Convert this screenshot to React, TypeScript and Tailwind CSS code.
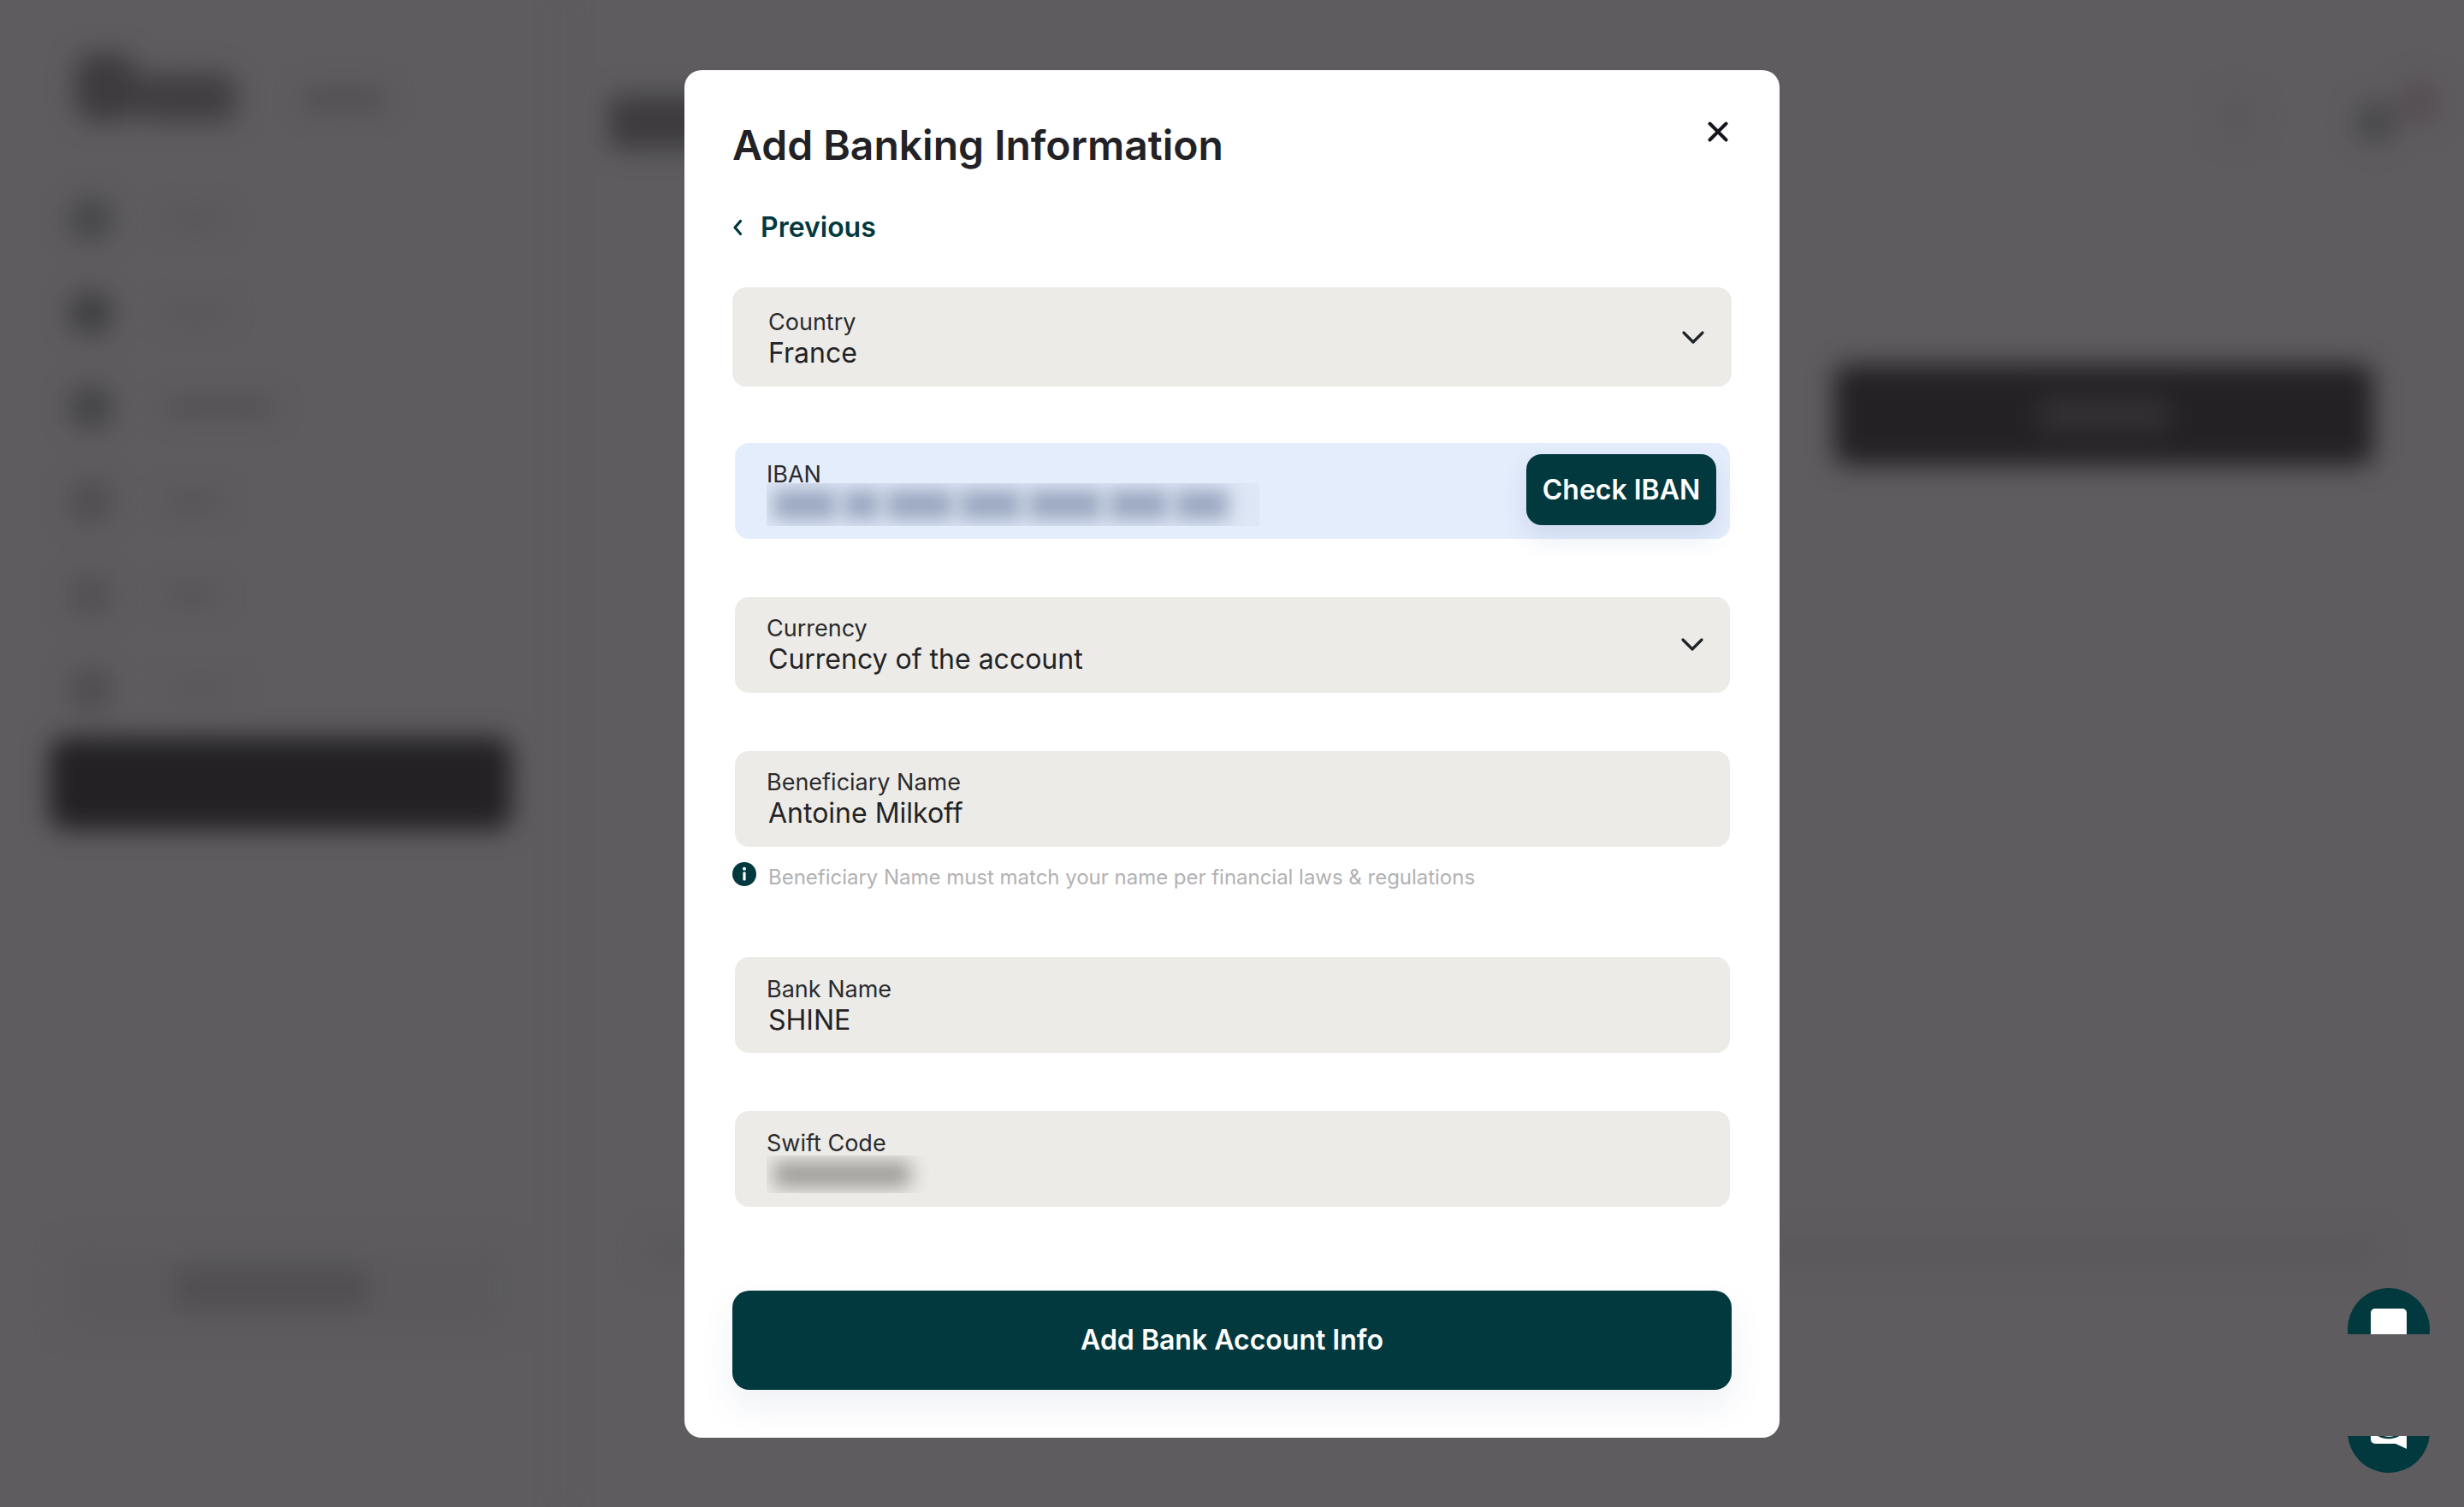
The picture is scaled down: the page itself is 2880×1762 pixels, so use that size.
import React from "react";

const teal = "bg-[#02393e]";

function Chevron() {
  return (
    <svg width="28" height="18" viewBox="0 0 28 18" fill="none" className="shrink-0">
      <path d="M3 3 L14 14 L25 3" stroke="#1f2328" strokeWidth="3.2" strokeLinecap="round" strokeLinejoin="round" />
    </svg>
  );
}

function Field({
  label,
  value,
  top = "pt-[21px]",
  h = "h-[112px]",
  wide = false,
  chevron = false,
  children,
}: {
  label: string;
  value?: string;
  top?: string;
  h?: string;
  wide?: boolean;
  chevron?: boolean;
  children?: React.ReactNode;
}) {
  return (
    <div className={`${h} ${wide ? "" : "ml-[3px] mr-[2px]"} ${top} flex items-start justify-between rounded-[16px] bg-[#ecebe7] ${wide ? "pl-[42px] pr-[31px]" : "pl-[37px] pr-[30px]"}`}>
      <div className="flex flex-col">
        <div className="text-[27px] leading-[34px] text-[#2b2b2d]">{label}</div>
        {value ? <div className={`text-[32px] leading-[38px] text-[#232326] ${wide ? "" : "ml-[2px]"}`}>{value}</div> : children}
      </div>
      {chevron ? <div className={wide ? "mt-[26px]" : "mt-[27px]"}><Chevron /></div> : null}
    </div>
  );
}

function NavRow({ icon, text, w }: { icon: string; text: string; w: string }) {
  return (
    <div className="flex h-[110px] items-center">
      <div className={`ml-[80px] h-[52px] w-[52px] rounded-full ${icon}`} />
      <div className={`ml-[62px] h-[18px] rounded-sm ${text} ${w}`} />
    </div>
  );
}

export default function App() {
  return (
    <div className="relative h-[1762px] w-[2880px] overflow-hidden bg-[#5e5c5f] font-['Inter',sans-serif]">
      {/* blurred page behind the dialog */}
      <div className="flex h-full w-full blur-[15px]">
        <aside className="flex w-[660px] shrink-0 flex-col border-r-2 border-[#58565a]">
          <div className="mt-[62px] flex items-end">
            <div className="ml-[88px] flex items-end">
              <div className="h-[80px] w-[72px] rounded-[24px] bg-[#3d3b3e]" />
              <div className="h-[56px] w-[116px] rounded-[16px] bg-[#403e41]" />
            </div>
            <div className="mb-[14px] ml-[78px] h-[24px] w-[96px] rounded bg-[#504e51]" />
          </div>
          <div className="mt-[59px] flex flex-col">
            <NavRow icon="bg-[#474649]" text="bg-[#575558]" w="w-[70px]" />
            <NavRow icon="bg-[#3f3e41]" text="bg-[#575558]" w="w-[70px]" />
            <NavRow icon="bg-[#444346]" text="bg-[#4f4d50]" w="w-[126px]" />
            <NavRow icon="bg-[#504e51]" text="bg-[#535154]" w="w-[64px]" />
            <NavRow icon="bg-[#535154]" text="bg-[#535154]" w="w-[60px]" />
            <NavRow icon="bg-[#4f4d50]" text="bg-[#585659]" w="w-[80px]" />
          </div>
          <div className="ml-[58px] mt-[1px] h-[108px] w-[540px] rounded-[20px] bg-[#232124]" />
          <div className="ml-[74px] mt-[488px] flex h-[96px] w-[520px] items-center rounded-lg bg-[#5b595c] pl-[130px]">
            <div className="h-[44px] w-[226px] rounded-lg bg-[#504e51]" />
          </div>
        </aside>
        <main className="flex flex-1 flex-col">
          <div className="flex items-start justify-between">
            <div className="ml-[52px] mt-[112px] h-[62px] w-[300px] rounded-lg bg-[#3d3b3e]" />
            <div className="mr-[28px] mt-[94px] flex items-start">
              <div className="mr-[116px] mt-[18px] h-[48px] w-[40px] rounded-lg bg-[#5a585b]" />
              <div className="mt-[24px] h-[50px] w-[50px] rounded-full bg-[#49484b]" />
              <div className="h-[50px] w-[50px] rounded-full bg-[#574d52]" />
            </div>
          </div>
          <div className="mr-[106px] mt-[252px] flex h-[118px] w-[630px] items-center justify-center self-end rounded-[16px] bg-[#232124]">
            <div className="h-[44px] w-[154px] rounded bg-[#323033]" />
          </div>
          <div className="ml-[96px] mr-[100px] mt-[902px] h-[34px] bg-[#5a585b]" />
        </main>
      </div>

      {/* chat launcher, cut by the capture */}
      <div className="absolute left-[2744px] top-[1506px] h-[54px] w-[96px] overflow-hidden">
        <div className={`relative h-[96px] w-[96px] rounded-full ${teal}`}>
          <div className="absolute left-[27px] top-[24px] h-[48px] w-[42px] rounded-[5px] bg-white" />
        </div>
      </div>
      <div className="absolute left-[2744px] top-[1679px] h-[43px] w-[96px] overflow-hidden">
        <div className={`relative -mt-[53px] h-[96px] w-[96px] rounded-full ${teal}`}>
          <svg width="42" height="44" viewBox="0 0 42 44" className="absolute left-[27px] top-[24px]">
            <path d="M5 0 H37 A5 5 0 0 1 42 5 V44 L29 38 H5 A5 5 0 0 1 0 33 V5 A5 5 0 0 1 5 0 Z" fill="#fff" />
            <path d="M5 25 C14 33 28 33 37 25" fill="none" stroke="#02393e" strokeWidth="2.6" strokeLinecap="round" />
          </svg>
        </div>
      </div>

      {/* dialog */}
      <div className="absolute inset-0 flex justify-center pt-[82px]">
        <div className="relative h-[1599px] w-[1280px] rounded-[20px] bg-white pl-[56px] pr-[56px]">
          <button className="absolute right-[60px] top-[60px]">
            <svg width="24" height="24" viewBox="0 0 24 24" fill="none">
              <path d="M2.5 2.5 L21.5 21.5 M21.5 2.5 L2.5 21.5" stroke="#16161d" strokeWidth="4" strokeLinecap="round" />
            </svg>
          </button>
          <h1 className="pt-[57px] text-[48px] font-semibold leading-[62px] text-[#222226]">Add Banking Information</h1>
          <div className="mt-[45px] flex h-[40px] items-center text-[32px] font-semibold leading-[40px] text-[#02393e]">
            <svg width="12" height="20" viewBox="0 0 12 20" fill="none" className="mr-[21px]">
              <path d="M9.5 2.5 L3 10 L9.5 17.5" stroke="#02393e" strokeWidth="3.2" strokeLinecap="round" strokeLinejoin="round" />
            </svg>
            Previous
          </div>

          <div className="mt-[50px]">
            <Field label="Country" value="France" h="h-[116px]" top="pt-[24px]" wide chevron />
          </div>

          <div className="relative ml-[3px] mr-[2px] mt-[66px] flex h-[112px] items-start justify-between rounded-[16px] bg-[#e4edfc] pl-[37px] pr-[16px] pt-[20px]">
            <div className="flex flex-col">
              <div className="text-[27px] leading-[34px] text-[#2b2b2d]">IBAN</div>
              <div className="-mt-[7px] flex h-[50px] w-[576px] items-center gap-[8px] overflow-hidden bg-[#dfe7f6] px-[8px]">
                {["w-[74px]", "w-[42px]", "w-[78px]", "w-[72px]", "w-[86px]", "w-[70px]", "w-[62px]"].map((w, i) => (
                  <div key={i} className={`h-[34px] shrink-0 rounded-sm bg-[#98a5be] blur-[11px] ${w}`} />
                ))}
              </div>
            </div>
            <button className={`-mt-[7px] flex h-[83px] w-[222px] items-center justify-center rounded-[18px] ${teal} text-[32px] font-semibold text-white shadow-[0_14px_30px_rgba(40,70,140,0.12)]`}>
              Check IBAN
            </button>
          </div>

          <div className="mt-[68px]">
            <Field label="Currency" value="Currency of the account" top="pt-[20px]" chevron />
          </div>

          <div className="mt-[68px]">
            <Field label="Beneficiary Name" value="Antoine Milkoff" top="pt-[20px]" />
          </div>
          <div className="mt-[18px] flex h-[30px] items-center">
            <svg width="28" height="28" viewBox="0 0 28 28" className="mr-[14px] -mt-[2px] shrink-0">
              <circle cx="14" cy="14" r="14" fill="#02393e" />
              <rect x="12.4" y="11.5" width="3.2" height="10" rx="1" fill="#fff" />
              <circle cx="14" cy="7.8" r="2" fill="#fff" />
            </svg>
            <span className="relative top-[3px] text-[24px] leading-[30px] tracking-[-0.02px] text-[#b2b1b3]">Beneficiary Name must match your name per financial laws &amp; regulations</span>
          </div>

          <div className="mt-[81px]">
            <Field label="Bank Name" value="SHINE" />
          </div>

          <div className="mt-[68px]">
            <Field label="Swift Code">
              <div className="ml-[0px] mt-[-3px] flex h-[44px] w-[190px] items-center overflow-hidden pl-[8px]">
                <div className="h-[30px] w-[160px] rounded-sm bg-[#9d9b98] blur-[11px]" />
              </div>
            </Field>
          </div>

          <button className={`mt-[98px] flex h-[116px] w-full items-center justify-center rounded-[20px] ${teal} text-[32px] font-semibold text-white shadow-[0_18px_40px_rgba(40,60,110,0.08)]`}>
            Add Bank Account Info
          </button>
        </div>
      </div>
    </div>
  );
}
